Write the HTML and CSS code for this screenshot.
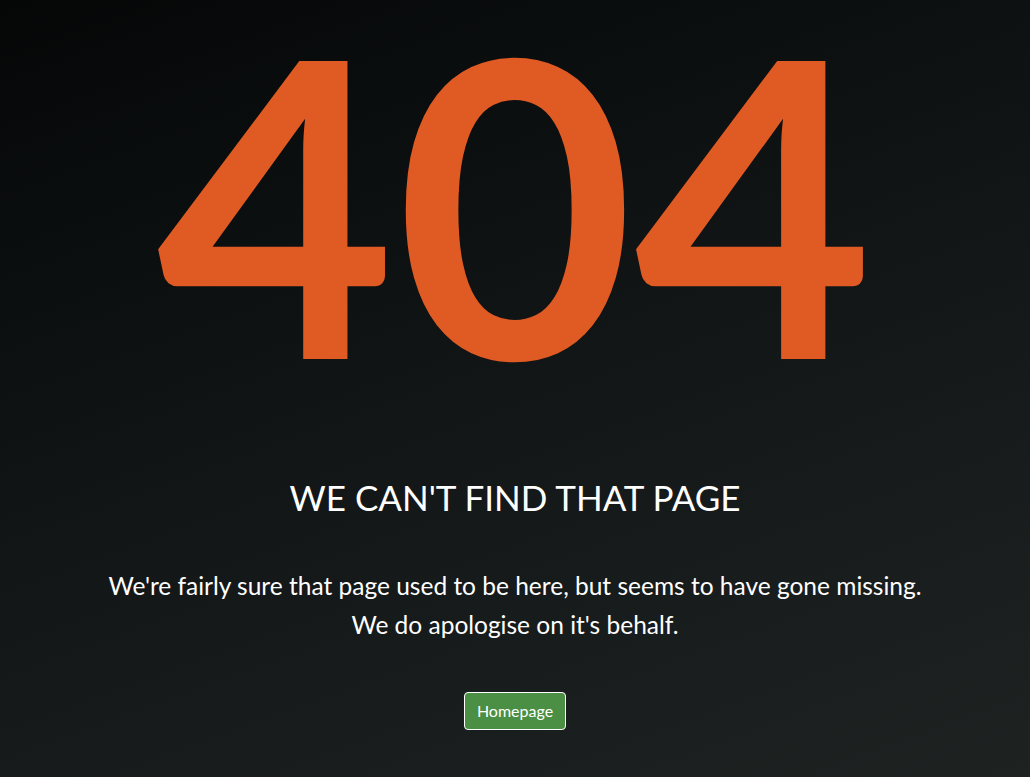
FILE: index.html
```html
<!DOCTYPE html>
<html lang="en">
<head>
<meta charset="utf-8">
<title>404</title>
<link rel="stylesheet" href="styles.css">
</head>
<body>
<main class="page">
  <h1 class="code">404</h1>
  <h2 class="title">WE CAN'T FIND THAT PAGE</h2>
  <p class="message">We're fairly sure that page used to be here, but seems to have gone missing.<br>We do apologise on it's behalf.</p>
  <a class="btn" href="#">Homepage</a>
</main>
</body>
</html>
```
FILE: styles.css
```css
html, body {
  margin: 0;
  height: 100%;
}
body {
  background: linear-gradient(160deg, #050707 0%, #121617 50%, #1e2322 100%);
  color: #ffffff;
  font-family: Lato, "Open Sans", sans-serif;
}
.page {
  display: flex;
  flex-direction: column;
  align-items: center;
  text-align: center;
  min-height: 100%;
}
.code {
  margin: 0;
  font-weight: 700;
  font-size: 412px;
  line-height: 400px;
  color: #e05a24;
}
.title {
  margin: 74px 0 0;
  font-weight: 400;
  font-size: 35px;
  line-height: 46px;
}
.message {
  margin: 46px 0 0;
  font-size: 24.5px;
  line-height: 39px;
}
.btn {
  margin-top: 48px;
  display: inline-block;
  background: #4a8f44;
  color: #fff;
  text-decoration: none;
  border: 1px solid #ffffff;
  border-radius: 4px;
  font-size: 16px;
  line-height: 20px;
  padding: 8px 12px;
}
```
